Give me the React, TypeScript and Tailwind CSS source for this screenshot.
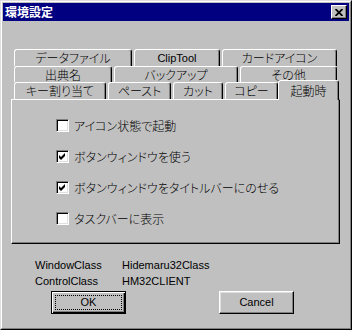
const jp = "font-['Noto_Sans_CJK_JP',sans-serif] [font-feature-settings:'palt'] text-[12px] font-light leading-none";
const latin = "font-['Liberation_Sans',Arial,sans-serif] text-[11px] leading-none";

const tabBase =
  "h-full flex items-center justify-center border-l border-t border-r border-l-white border-t-white border-r-black rounded-t-[3px] shadow-[inset_-1px_0_#808080] bg-[#c0c0c0] text-black";

function Tab({ label, w, isLatin }: { label: string; w: string; isLatin?: boolean }) {
  return (
    <div className={`${tabBase} ${w}`}>
      <span className={isLatin ? latin : jp}>{label}</span>
    </div>
  );
}

function CheckBox({ checked }: { checked?: boolean }) {
  return (
    <div className="w-[13px] h-[13px] shrink-0 bg-white border border-t-[#808080] border-l-[#808080] border-r-white border-b-white shadow-[inset_1px_1px_#000,inset_-1px_-1px_#dfdfdf] flex items-center justify-center">
      {checked && (
        <svg width="7" height="7" viewBox="0 0 7 7">
          <polygon points="0,2 2,4 6,0 6,3 2,7 0,5" fill="#000" />
        </svg>
      )}
    </div>
  );
}

function Option({ label, checked }: { label: string; checked?: boolean }) {
  return (
    <div className="flex items-center gap-[5px] h-[13px]">
      <CheckBox checked={checked} />
      <span className={jp}>{label}</span>
    </div>
  );
}

export default function App() {
  return (
    <div className="w-[352px] h-[330px] bg-[#c0c0c0] border border-t-[#dfdfdf] border-l-[#dfdfdf] border-r-black border-b-black">
      <div className="h-full border border-t-white border-l-white border-r-[#808080] border-b-[#808080] p-px flex flex-col">
        {/* title bar */}
        <div className="h-[18px] bg-[#000080] flex items-center justify-between pl-[2px] pr-[2px]">
          <span className="font-['Noto_Sans_CJK_JP',sans-serif] text-[12px] font-bold text-white leading-none">
            環境設定
          </span>
          <div className="w-[16px] h-[14px] bg-[#c0c0c0] border border-t-white border-l-white border-r-black border-b-black shadow-[inset_-1px_-1px_#808080] flex items-center justify-center">
            <svg width="8" height="7" viewBox="0 0 8 7">
              <path d="M0.5 0 L7.5 7 M7.5 0 L0.5 7" stroke="#000" strokeWidth="1.8" />
            </svg>
          </div>
        </div>

        {/* body */}
        <div className="flex flex-col pl-[8px] pr-[9px] pt-[28px]">
          <div className="flex flex-col pl-[3px]">
            <div className="flex h-[17px] gap-[2px]">
              <Tab label="データファイル" w="w-[118px]" />
              <Tab label="ClipTool" w="w-[86px]" isLatin />
              <Tab label="カードアイコン" w="w-[115px]" />
            </div>
            <div className="flex h-[16px] gap-[2px]">
              <Tab label="出典名" w="w-[98px]" />
              <Tab label="バックアップ" w="w-[124px]" />
              <Tab label="その他" w="w-[97px]" />
            </div>
            <div className="flex h-[17px] items-end">
              <div className="flex h-[17px] gap-[2px]">
                <Tab label="キー割り当て" w="w-[92px]" />
                <Tab label="ペースト" w="w-[63px]" />
                <Tab label="カット" w="w-[50px]" />
                <Tab label="コピー" w="w-[53px]" />
              </div>
              <div className="relative z-10 -mb-px w-[61px] h-[20px] flex items-start justify-center pt-[4px] border-l border-t border-r border-l-white border-t-white border-r-black rounded-t-[3px] shadow-[inset_-1px_0_#808080] bg-[#c0c0c0]">
                <span className={jp}>起動時</span>
              </div>
            </div>
          </div>

          {/* panel */}
          <div className="h-[145px] border border-t-white border-l-white border-r-black border-b-black shadow-[inset_-1px_-1px_#808080] pl-[44px] pt-[19px] flex flex-col gap-[18px]">
            <Option label="アイコン状態で起動" />
            <Option label="ボタンウィンドウを使う" checked />
            <Option label="ボタンウィンドウをタイトルバーにのせる" checked />
            <Option label="タスクバーに表示" />
          </div>

          {/* info */}
          <div className={`mt-[13px] ml-[24px] grid grid-cols-[87px_auto] ${latin}`}>
            <span className="h-[16px] flex items-center">WindowClass</span>
            <span className="h-[16px] flex items-center">Hidemaru32Class</span>
            <span className="h-[16px] flex items-center">ControlClass</span>
            <span className="h-[16px] flex items-center">HM32CLIENT</span>
          </div>

          {/* buttons */}
          <div className="mt-[2px] ml-[40px] flex gap-[93px]">
            <button className="w-[75px] h-[23px] bg-[#c0c0c0] border border-black shadow-[inset_1px_1px_#fff,inset_-1px_-1px_#000,inset_-2px_-2px_#808080] p-[3px] flex">
              <span className={`flex-1 flex items-center justify-center border border-dotted border-black ${latin}`}>OK</span>
            </button>
            <button className="w-[75px] h-[23px] bg-[#c0c0c0] border border-t-white border-l-white border-r-black border-b-black shadow-[inset_-1px_-1px_#808080,inset_1px_1px_#dfdfdf] flex items-center justify-center">
              <span className={latin}>Cancel</span>
            </button>
          </div>
        </div>
      </div>
    </div>
  );
}
